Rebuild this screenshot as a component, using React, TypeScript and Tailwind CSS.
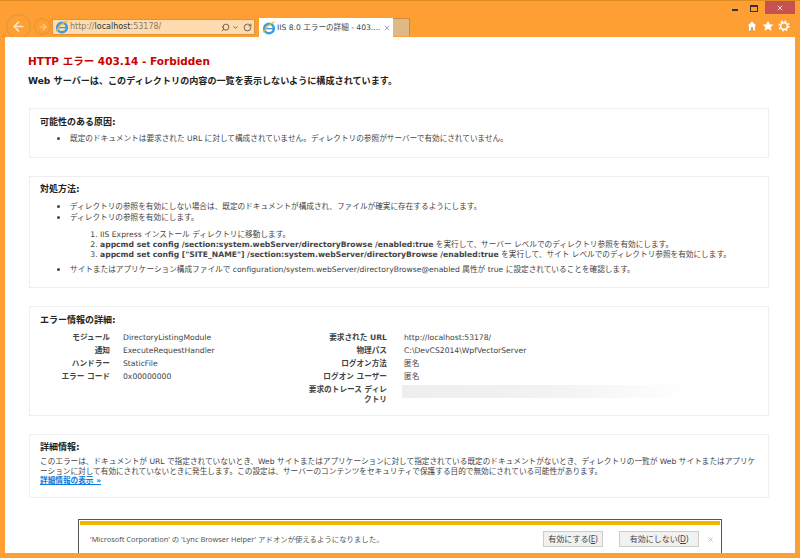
import { ArrowLeft, ArrowRight, ChevronDown, RotateCw, Search, X } from 'lucide-react';

const jp = "font-['DejaVu_Sans','Noto_Sans_CJK_JP',sans-serif]";

function IeLogo() {
    return (
        <svg width="14" height="14" viewBox="0 0 14 14" className="shrink-0">
            <circle cx="7" cy="7.5" r="4.8" fill="none" stroke="#3aa0dc" strokeWidth="2.6" />
            <rect x="3.5" y="7" width="7.5" height="1.3" fill="#3aa0dc" />
            <path d="M1.5 11.5C3 7 7.5 2.5 12.5 1.2" fill="none" stroke="#f0b429" strokeWidth="1.2" />
        </svg>
    );
}

function Panel({ title, className, children }: { title: string; className: string; children?: React.ReactNode }) {
    return (
        <section className={`mr-[26px] ml-6 border border-[#eeeeee] px-[10px] ${className}`}>
            <h3 className="text-[9px] leading-[12px] font-bold text-[#222222]">{title}</h3>
            {children}
        </section>
    );
}

const detailLeft = [
    ['モジュール', 'DirectoryListingModule'],
    ['通知', 'ExecuteRequestHandler'],
    ['ハンドラー', 'StaticFile'],
    ['エラー コード', '0x00000000'],
];

const detailRight = [
    ['要求された URL', 'http://localhost:53178/'],
    ['物理パス', 'C:\\DevCS2014\\WpfVectorServer'],
    ['ログオン方法', '匿名'],
    ['ログオン ユーザー', '匿名'],
];

export default function App() {
    return (
        <div className={`flex h-[558px] w-[800px] flex-col overflow-hidden bg-[#fd9f33] ${jp}`}>
            {/* title bar */}
            <div className="flex h-[14px] shrink-0 items-start justify-end border-t border-[#e08a24] pr-[5px]">
                <div className="mt-[8px] h-[1.5px] w-[6px] bg-[#333333]" />
                <div className="mt-[4px] ml-[12px] h-[7px] w-[8px] border border-t-2 border-[#333333]" />
                <div className="ml-[7px] flex h-[13px] w-[30px] items-center justify-center bg-[#c75050]">
                    <X size={8} strokeWidth={2.5} className="text-white" />
                </div>
            </div>

            {/* toolbar */}
            <div className="flex h-[23px] shrink-0 items-end pl-[6px]">
                <div className="mb-[-2px] flex h-[25px] w-[25px] items-center justify-center self-end rounded-full border border-[#e0923a]">
                    <ArrowLeft size={15} strokeWidth={2.5} className="text-[#fde6cc]" />
                </div>
                <div className="mb-[2px] ml-[3px] flex h-[17px] w-[17px] items-center justify-center rounded-full border border-[#e0923a]">
                    <ArrowRight size={10} strokeWidth={2.5} className="text-[#fbd6a8]" />
                </div>
                <div className="mb-[2px] ml-[1px] flex h-[16px] w-[203px] items-center border border-[#e39237] bg-[#fedcb0] pl-[2px] text-[8px] text-[#8a7a68]">
                    <IeLogo />
                    <span className="ml-[1px] whitespace-nowrap">
                        http://<span className="text-[#333333]">localhost</span>:53178/
                    </span>
                    <div className="ml-auto flex items-center pr-[2px] text-[#6b5a48]">
                        <Search size={9} strokeWidth={2.5} className="-scale-x-100" />
                        <ChevronDown size={7} strokeWidth={3} className="ml-[2px]" />
                        <RotateCw size={9} strokeWidth={2.5} className="ml-[4px]" />
                    </div>
                </div>
                <div className="ml-[4px] flex h-[19px] w-[134px] items-center bg-white pl-[3px] text-[7.6px] text-[#444444]">
                    <IeLogo />
                    <span className="ml-[1px] whitespace-nowrap">IIS 8.0 エラーの詳細 - 403....</span>
                    <X size={8} strokeWidth={2.5} className="mr-[2px] ml-auto text-[#8899aa]" />
                </div>
                <div className="mb-[1px] h-[18px] w-[17px] rounded-tr-[1px] border-t border-r border-[#d08a3a] bg-[#deb887]" />
                <div className="mb-[5px] ml-auto flex items-center gap-[4px] pr-[10px]">
                    <svg width="12" height="12" viewBox="0 0 12 12">
                        <path d="M6 1 1 6h1.6v5h2.5V7.5h1.8V11h2.5V6H11z" fill="#fff" stroke="#b87a30" strokeWidth=".4" />
                    </svg>
                    <svg width="12" height="12" viewBox="0 0 12 12">
                        <path d="m6 .8 1.6 3.5 3.9.4-2.9 2.6.8 3.8L6 8.7l-3.4 2 .8-3.8L.5 4.7l3.9-.4z" fill="#fff" />
                    </svg>
                    <svg width="12" height="12" viewBox="0 0 12 12">
                        <circle cx="6" cy="6" r="3.4" fill="none" stroke="#fff" strokeWidth="1.6" />
                        <circle cx="6" cy="6" r="4.8" fill="none" stroke="#fff" strokeWidth="1.6" strokeDasharray="1.9 1.87" />
                    </svg>
                </div>
            </div>

            {/* page */}
            <main className="relative mx-[5px] mb-[5px] flex-1 bg-white text-[7.65px] leading-[10px] text-[#444444]">
                <h1 className="ml-[23px] pt-[17px] text-[10.5px] leading-[15px] font-bold text-[#cc0000]">HTTP エラー 403.14 - Forbidden</h1>
                <h2 className="mt-[6px] ml-[23px] text-[9.1px] leading-[12px] font-bold text-[#222222]">
                    Web サーバーは、このディレクトリの内容の一覧を表示しないように構成されています。
                </h2>

                <Panel title="可能性のある原因:" className="mt-[21px] h-[50px] pt-[7px]">
                    <ul className="mt-[5px] list-disc pl-[30px] marker:text-[11px]">
                        <li>既定のドキュメントは要求された URL に対して構成されていません。ディレクトリの参照がサーバーで有効にされていません。</li>
                    </ul>
                </Panel>

                <Panel title="対処方法:" className="mt-[18px] h-[112px] pt-[6px]">
                    <ul className="mt-[6px] list-disc pl-[30px] marker:text-[11px]">
                        <li>ディレクトリの参照を有効にしない場合は、既定のドキュメントが構成され、ファイルが確実に存在するようにします。</li>
                        <li>ディレクトリの参照を有効にします。</li>
                    </ul>
                    <ol className="mt-[7px] list-decimal pl-[60px]">
                        <li>IIS Express インストール ディレクトリに移動します。</li>
                        <li><b>appcmd set config /section:system.webServer/directoryBrowse /enabled:true</b> を実行して、サーバー レベルでのディレクトリ参照を有効にします。</li>
                        <li><b>appcmd set config ["SITE_NAME"] /section:system.webServer/directoryBrowse /enabled:true</b> を実行して、サイト レベルでのディレクトリ参照を有効にします。</li>
                    </ol>
                    <ul className="mt-[4px] list-disc pl-[30px] marker:text-[11px]">
                        <li>サイトまたはアプリケーション構成ファイルで configuration/system.webServer/directoryBrowse@enabled 属性が true に設定されていることを確認します。</li>
                    </ul>
                </Panel>

                <Panel title="エラー情報の詳細:" className="mt-[18px] h-[110px] pt-[7px]">
                    <div className="mt-[7px] flex">
                        <div className="grid w-[267px] shrink-0 grid-cols-[70px_1fr] content-start gap-x-[13px]">
                            {detailLeft.map(([label, value]) => (
                                <div key={label} className="contents">
                                    <span className="h-[13px] text-right font-bold">{label}</span>
                                    <span className="h-[13px] whitespace-nowrap">{value}</span>
                                </div>
                            ))}
                        </div>
                        <div className="grid grid-cols-[80px_1fr] content-start gap-x-[17px]">
                            {detailRight.map(([label, value]) => (
                                <div key={label} className="contents">
                                    <span className="h-[13px] text-right font-bold">{label}</span>
                                    <span className="h-[13px] whitespace-nowrap">{value}</span>
                                </div>
                            ))}
                            <span className="text-right leading-[9.5px] font-bold">要求のトレース ディレクトリ</span>
                            <div className="-ml-[2px] h-[13px] w-[289px] bg-gradient-to-r from-[#eeeeee] via-[#f2f2f2] to-white" />
                        </div>
                    </div>
                </Panel>

                <Panel title="詳細情報:" className="mt-[18px] h-[64px] pt-[6px]">
                    <p className="mt-[4px] leading-[9.5px]">
                        このエラーは、ドキュメントが URL で指定されていないとき、Web サイトまたはアプリケーションに対して指定されている既定のドキュメントがないとき、ディレクトリの一覧が Web サイトまたはアプリケーションに対して有効にされていないときに発生します。この設定は、サーバーのコンテンツをセキュリティで保護する目的で無効にされている可能性があります。
                    </p>
                    <a className="block leading-[9px] font-bold text-[#0a7bdc] underline">詳細情報の表示 »</a>
                </Panel>

                {/* add-on notification */}
                <div className="absolute bottom-0 left-[73px] flex h-[34px] w-[644px] flex-col border-t border-r border-l border-[#555555] bg-white font-['Noto_Sans','Noto_Sans_CJK_JP',sans-serif]">
                    <div className="mx-[1px] mt-[1px] h-[4px] bg-[#f5b400]" />
                    <div className="flex flex-1 items-center pl-[11px] text-[7.4px] text-[#555555]">
                        <span className="whitespace-nowrap">'Microsoft Corporation' の 'Lync Browser Helper' アドオンが使えるようになりました。</span>
                        <button className="ml-auto h-[16px] w-[60px] border border-[#cccccc] bg-[#f1f1f1] text-[8px] text-[#444444]">有効にする(<u>E</u>)</button>
                        <button className="ml-[16px] h-[16px] w-[80px] border border-[#cccccc] bg-[#f1f1f1] text-[8px] text-[#444444]">有効にしない(<u>D</u>)</button>
                        <X size={7} strokeWidth={2.5} className="mr-[7px] ml-[8px] text-[#aaaaaa]" />
                    </div>
                </div>
            </main>
        </div>
    );
}
